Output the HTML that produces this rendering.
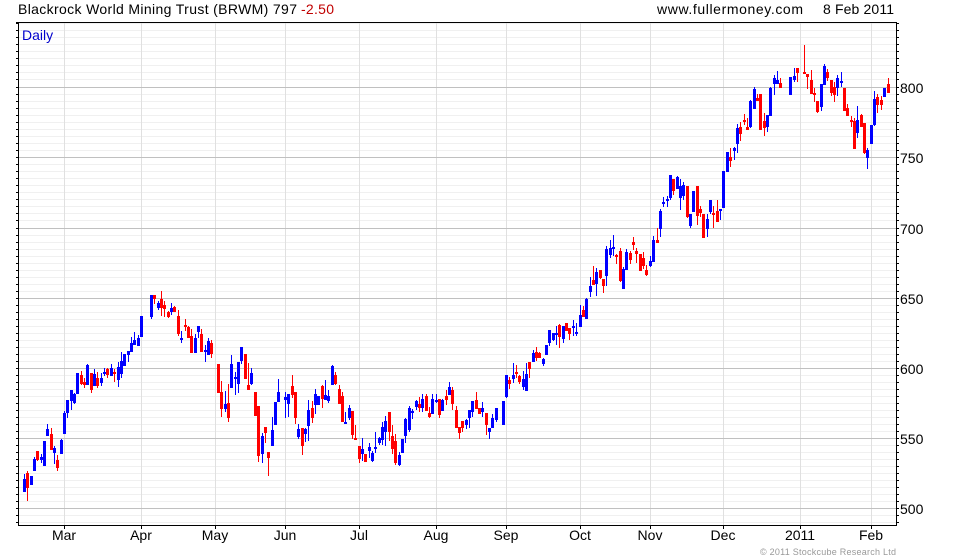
<!DOCTYPE html>
<html>
<head>
<meta charset="utf-8">
<title>Blackrock World Mining Trust</title>
<style>
html,body{margin:0;padding:0;background:#fff}
svg{display:block;position:absolute;left:0;top:0}
text{font-family:"Liberation Sans",Arial,sans-serif;font-size:14px;fill:#000}
.m text{text-anchor:middle}
</style>
</head>
<body>
<svg width="980" height="560" viewBox="0 0 980 560" xmlns="http://www.w3.org/2000/svg">
<defs>
<path id="h" d="M16 23.5H899M16 30.5H899M16 37.5H899M16 44.5H899M16 51.5H899M16 58.5H899M16 65.5H899M16 72.5H899M16 79.5H899M16 87.5H899M16 94.5H899M16 101.5H899M16 108.5H899M16 115.5H899M16 122.5H899M16 129.5H899M16 136.5H899M16 143.5H899M16 150.5H899M16 157.5H899M16 164.5H899M16 171.5H899M16 178.5H899M16 185.5H899M16 192.5H899M16 199.5H899M16 206.5H899M16 213.5H899M16 220.5H899M16 228.5H899M16 235.5H899M16 242.5H899M16 249.5H899M16 256.5H899M16 263.5H899M16 270.5H899M16 277.5H899M16 284.5H899M16 291.5H899M16 298.5H899M16 305.5H899M16 312.5H899M16 319.5H899M16 326.5H899M16 333.5H899M16 340.5H899M16 347.5H899M16 354.5H899M16 361.5H899M16 368.5H899M16 375.5H899M16 382.5H899M16 389.5H899M16 396.5H899M16 403.5H899M16 410.5H899M16 417.5H899M16 424.5H899M16 431.5H899M16 438.5H899M16 445.5H899M16 452.5H899M16 459.5H899M16 466.5H899M16 473.5H899M16 480.5H899M16 487.5H899M16 494.5H899M16 501.5H899M16 508.5H899M16 515.5H899M16 522.5H899"/>
<clipPath id="c"><rect x="19" y="23" width="877" height="502"/></clipPath>
</defs>
<g shape-rendering="crispEdges" fill="none">
<use href="#h" stroke="#000"/>
<rect x="18" y="22" width="879" height="504" fill="#fff"/>
<g clip-path="url(#c)">
<use href="#h" stroke="#f0f0f0"/>
<path stroke="#e0e0e0" d="M64.5 23V525M141.5 23V525M215.5 23V525M285.5 23V525M359.5 23V525M436.5 23V525M506.5 23V525M580.5 23V525M650.5 23V525M723.5 23V525M800.5 23V525M871.5 23V525"/>
<path stroke="#c0c0c0" d="M19 87.5H896M19 157.5H896M19 228.5H896M19 298.5H896M19 368.5H896M19 438.5H896M19 508.5H896"/>
</g>
<!-- blue wicks -->
<path stroke="#0000ff" stroke-width="1" d="M24.5 474V492M31.5 476V485M34.5 457V471M41.5 454V463M44.5 441V466M47.5 424V436M54.5 446V464M61.5 439V454M64.5 411V434M67.5 400V418M71.5 390V410M74.5 393V404M77.5 373V394M87.5 364V385M94.5 369V386M101.5 373V386M104.5 368V376M111.5 364V376M118.5 362V387M121.5 352V378M124.5 354V366M128.5 351V362M131.5 337V352M134.5 332V345M138.5 335V346M141.5 316V337M151.5 295V319M158.5 301V310M171.5 303V315M181.5 331V343M195.5 334V353M198.5 326V338M205.5 345V362M208.5 338V355M225.5 391V412M231.5 355V388M235.5 372V395M238.5 362V393M241.5 347V364M251.5 368V385M262.5 433V463M272.5 417V446M275.5 402V425M278.5 379V402M285.5 392V418M288.5 394V417M298.5 424V439M305.5 428V442M308.5 400V441M315.5 389V414M318.5 396V405M325.5 380V400M328.5 390V403M332.5 365V385M345.5 412V424M349.5 405V420M362.5 438V461M369.5 443V458M372.5 451V462M375.5 432V453M379.5 437V445M382.5 422V445M385.5 416V446M399.5 452V466M402.5 439V453M405.5 418V443M409.5 406V432M412.5 409V419M416.5 400V410M422.5 394V412M432.5 394V414M436.5 394V403M442.5 399V411M449.5 382V395M466.5 419V429M469.5 410V428M472.5 401V417M482.5 402V417M489.5 428V439M492.5 414V428M496.5 408V422M503.5 401V425M506.5 375V398M513.5 363V383M523.5 371V390M526.5 363V391M533.5 350V362M543.5 358V366M546.5 345V355M549.5 330V346M553.5 333V341M556.5 326V345M563.5 326V343M573.5 320V336M576.5 323V336M580.5 305V327M586.5 298V319M590.5 277V297M596.5 268V296M606.5 246V286M610.5 240V258M613.5 235V256M623.5 267V289M626.5 249V270M650.5 256V267M653.5 236V262M660.5 209V237M663.5 197V207M667.5 196V207M670.5 175V200M677.5 176V189M680.5 179V210M683.5 182V200M690.5 214V228M693.5 191V212M707.5 214V237M710.5 200V214M720.5 209V220M723.5 171V208M727.5 152V172M734.5 147V160M737.5 124V153M750.5 100V128M754.5 87V109M767.5 115V132M770.5 87V116M774.5 75V95M777.5 71V84M790.5 77V95M794.5 68V82M821.5 84V111M824.5 64V85M837.5 75V96M841.5 72V87M857.5 106V138M867.5 148V169M871.5 125V144M874.5 91V126M884.5 88V97"/>
<!-- blue bodies -->
<path stroke="#0000ff" stroke-width="3" d="M24.5 479V492M31.5 476V485M34.5 459V471M41.5 457V460M44.5 441V466M47.5 429V436M54.5 448V453M61.5 440V454M64.5 413V434M67.5 400V413M71.5 390V401M74.5 394V403M77.5 373V394M87.5 365V385M94.5 374V386M101.5 378V383M104.5 372V374M111.5 368V376M118.5 367V380M121.5 361V374M124.5 354V366M128.5 351V355M131.5 343V352M134.5 340V345M138.5 338V346M141.5 316V337M151.5 295V317M158.5 303V308M171.5 308V312M181.5 338V340M195.5 338V353M198.5 326V332M205.5 350V352M208.5 341V355M225.5 404V409M231.5 364V388M235.5 377V379M238.5 362V384M241.5 347V361M251.5 373V384M262.5 436V454M272.5 430V446M275.5 402V425M278.5 392V402M285.5 397V400M288.5 394V404M298.5 429V437M305.5 429V434M308.5 410V426M315.5 394V405M318.5 396V405M325.5 395V400M328.5 396V401M332.5 366V385M345.5 422V424M349.5 408V418M362.5 449V454M369.5 447V451M372.5 453V461M375.5 447V449M379.5 438V443M382.5 427V440M385.5 421V432M399.5 455V465M402.5 439V453M405.5 419V436M409.5 408V430M412.5 411V413M416.5 401V407M422.5 399V408M432.5 399V414M436.5 400V402M442.5 400V411M449.5 387V395M466.5 420V425M469.5 410V418M472.5 401V412M482.5 408V412M489.5 428V432M492.5 418V428M496.5 408V420M503.5 401V425M506.5 375V397M513.5 375V379M523.5 379V387M526.5 374V391M533.5 353V362M543.5 359V364M546.5 345V355M549.5 330V343M553.5 333V340M556.5 333V335M563.5 326V339M573.5 326V328M576.5 332V334M580.5 315V327M586.5 299V319M590.5 286V292M596.5 272V284M606.5 249V276M610.5 248V255M613.5 247V249M623.5 269V289M626.5 252V270M650.5 261V266M653.5 240V262M660.5 211V229M663.5 202V204M667.5 199V201M670.5 175V198M677.5 177V189M680.5 186V198M683.5 185V196M690.5 214V226M693.5 191V212M707.5 219V229M710.5 200V212M720.5 209V211M723.5 171V208M727.5 152V172M734.5 148V151M737.5 128V144M750.5 101V127M754.5 89V109M767.5 115V127M770.5 88V116M774.5 78V84M777.5 80V84M790.5 77V95M794.5 76V80M821.5 84V107M824.5 66V85M837.5 78V88M841.5 81V83M857.5 120V133M867.5 150V158M871.5 125V144M874.5 99V125M884.5 88V97"/>
<!-- red wicks -->
<path stroke="#ff0000" stroke-width="1" d="M27.5 471V501M37.5 451V461M51.5 428V450M57.5 455V471M81.5 371V385M84.5 378V388M91.5 373V393M97.5 372V388M107.5 368V378M114.5 369V382M154.5 295V304M161.5 291V316M164.5 301V317M168.5 311V318M174.5 306V312M178.5 310V336M185.5 319V331M188.5 326V338M191.5 329V353M201.5 329V352M211.5 340V358M218.5 364V393M221.5 381V417M228.5 384V422M245.5 354V379M248.5 363V390M255.5 392V416M258.5 406V462M265.5 427V443M268.5 452V476M292.5 375V398M295.5 392V424M302.5 428V455M312.5 401V423M322.5 385V408M335.5 372V385M339.5 385V404M342.5 392V422M352.5 411V439M355.5 425V440M359.5 446V463M365.5 454V462M389.5 412V441M392.5 425V454M395.5 434V465M419.5 397V412M426.5 394V411M429.5 407V418M439.5 399V418M446.5 390V405M452.5 387V410M456.5 406V428M459.5 427V439M462.5 421V432M476.5 392V409M479.5 408V414M486.5 413V435M509.5 377V389M516.5 365V378M519.5 375V384M529.5 362V378M536.5 347V361M539.5 352V358M559.5 324V348M566.5 323V331M569.5 328V340M583.5 306V317M593.5 266V285M600.5 270V279M603.5 279V293M616.5 254V264M620.5 248V282M630.5 251V264M633.5 237V250M636.5 248V263M640.5 254V271M643.5 252V269M646.5 265V276M657.5 228V243M673.5 179V195M687.5 186V218M697.5 186V225M700.5 206V217M703.5 214V238M713.5 206V228M717.5 200V222M730.5 148V167M740.5 122V141M744.5 114V125M747.5 118V130M757.5 94V101M760.5 94V130M764.5 113V136M780.5 78V88M797.5 68V82M804.5 45V74M807.5 74V89M811.5 70V94M814.5 88V102M817.5 101V113M827.5 69V81M831.5 80V96M834.5 82V102M844.5 88V111M847.5 104V116M851.5 116V127M854.5 118V149M861.5 114V127M864.5 123V154M877.5 94V113M881.5 96V110M888.5 78V93"/>
<!-- red bodies -->
<path stroke="#ff0000" stroke-width="3" d="M27.5 473V488M37.5 451V460M51.5 434V450M57.5 460V468M81.5 375V384M84.5 382V385M91.5 373V390M97.5 378V386M107.5 369V375M114.5 372V374M154.5 295V299M161.5 299V308M164.5 305V309M168.5 312V317M174.5 307V312M178.5 316V334M185.5 325V327M188.5 327V338M191.5 336V353M201.5 334V352M211.5 343V354M218.5 364V393M221.5 392V409M228.5 403V418M245.5 354V379M248.5 385V390M255.5 392V416M258.5 406V456M265.5 427V433M268.5 452V458M292.5 386V395M295.5 392V418M302.5 428V446M312.5 408V418M322.5 386V399M335.5 375V384M339.5 389V404M342.5 396V422M352.5 411V435M355.5 438V440M359.5 446V459M365.5 454V462M389.5 412V432M392.5 436V449M395.5 441V463M419.5 404V408M426.5 396V411M429.5 413V417M439.5 399V415M446.5 396V400M452.5 390V404M456.5 410V428M459.5 427V433M462.5 421V428M476.5 400V409M479.5 408V414M486.5 413V425M509.5 380V384M516.5 372V374M519.5 376V382M529.5 362V369M536.5 352V358M539.5 353V358M559.5 325V337M566.5 323V331M569.5 328V334M583.5 310V317M593.5 280V285M600.5 270V278M603.5 279V286M616.5 255V257M620.5 251V281M630.5 253V260M633.5 242V245M636.5 251V254M640.5 254V271M643.5 258V266M646.5 270V275M657.5 240V243M673.5 179V191M687.5 186V217M697.5 186V216M700.5 209V213M703.5 214V238M713.5 213V215M717.5 211V222M730.5 157V161M740.5 127V134M744.5 120V122M747.5 127V130M757.5 98V101M760.5 94V130M764.5 121V128M780.5 83V88M797.5 68V73M804.5 72V74M807.5 74V77M811.5 80V94M814.5 93V95M817.5 101V112M827.5 72V78M831.5 80V93M834.5 87V95M844.5 88V111M847.5 108V116M851.5 120V122M854.5 121V149M861.5 115V127M864.5 123V153M877.5 97V105M881.5 100V105M888.5 84V93"/>
<!-- frame and bottom ticks -->
<path stroke="#000" d="M16 22.5H897M18.5 22V526M896.5 22V526M18 525.5H897M64.5 525V529M141.5 525V529M215.5 525V529M285.5 525V529M359.5 525V529M436.5 525V529M506.5 525V529M580.5 525V529M650.5 525V529M723.5 525V529M800.5 525V529M871.5 525V529"/>
</g>
<text x="18" y="14" textLength="279">Blackrock World Mining Trust (BRWM) 797</text>
<text x="301" y="14" textLength="33" style="fill:#c00000">-2.50</text>
<text x="657" y="14" textLength="146">www.fullermoney.com</text>
<text x="823" y="14" textLength="71">8 Feb 2011</text>
<text x="22" y="40" style="fill:#0000cc">Daily</text>
<g>
<text x="900" y="93">800</text>
<text x="900" y="163">750</text>
<text x="900" y="234">700</text>
<text x="900" y="304">650</text>
<text x="900" y="374">600</text>
<text x="900" y="444">550</text>
<text x="900" y="514">500</text>
</g>
<g class="m">
<text x="64" y="540">Mar</text>
<text x="141" y="540">Apr</text>
<text x="215" y="540">May</text>
<text x="285" y="540">Jun</text>
<text x="359" y="540">Jul</text>
<text x="436" y="540">Aug</text>
<text x="506" y="540">Sep</text>
<text x="580" y="540">Oct</text>
<text x="650" y="540">Nov</text>
<text x="723" y="540">Dec</text>
<text x="800" y="540">2011</text>
<text x="871" y="540">Feb</text>
</g>
<text x="760" y="555" textLength="136" style="font-size:9px;fill:#999">© 2011 Stockcube Research Ltd</text>
</svg>
</body>
</html>
